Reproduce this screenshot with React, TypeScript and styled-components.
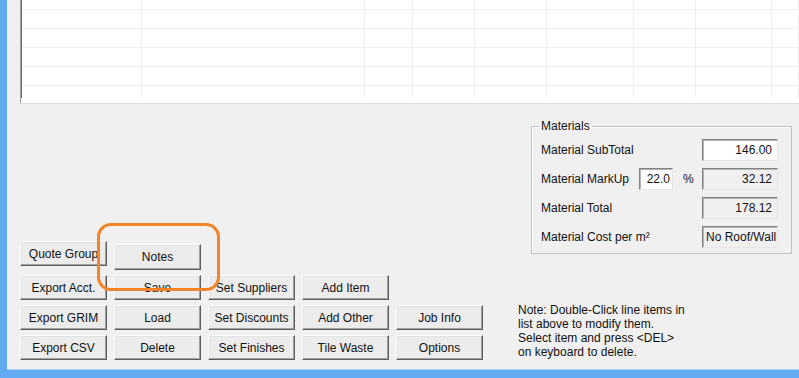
import styled, { createGlobalStyle } from 'styled-components'

const GlobalStyle = createGlobalStyle`
  html, body {
    margin: 0;
    padding: 0;
    overflow: hidden;
    background: #62aaf2;
  }
  body {
    font-family: "Liberation Sans", Arial, sans-serif;
    color: #111;
  }
`

const gridColumns = [120, 223, 48, 62, 72, 87, 62, 76, 27]
const gridRows = [10, 19, 19, 19, 19, 12]

const buttonRows: (string | null)[][] = [
  ['Quote Group', 'Notes', null, null, null],
  ['Export Acct.', 'Save', 'Set Suppliers', 'Add Item', null],
  ['Export GRIM', 'Load', 'Set Discounts', 'Add Other', 'Job Info'],
  ['Export CSV', 'Delete', 'Set Finishes', 'Tile Waste', 'Options'],
]

const noteLines = [
  'Note: Double-Click line items in',
  'list above to modify them.',
  'Select item and press <DEL>',
  'on keyboard to delete.',
]

export default function App() {
  return (
    <>
      <GlobalStyle />
      <Window>
        <Client>
          <ItemList>
            <ItemGrid>
              {gridRows.map((_, r) =>
                gridColumns.map((_, c) => <Cell key={`${r}-${c}`} $last={r === gridRows.length - 1} />)
              )}
            </ItemGrid>
          </ItemList>

          <Lower>
            <ButtonPanel>
              <ButtonGrid>
                {buttonRows.map((row, r) =>
                  row.map((label, c) =>
                    label ? (
                      <Button key={label} $drop={label === 'Notes'}>{label}</Button>
                    ) : (
                      <span key={`gap-${r}-${c}`} />
                    )
                  )
                )}
              </ButtonGrid>
            </ButtonPanel>

            <SidePanel>
              <GroupBox>
                <Legend>Materials</Legend>
                <FieldRow>
                  <Label $span={3}>Material SubTotal</Label>
                  <Field $editable>146.00</Field>
                </FieldRow>
                <FieldRow>
                  <Label>Material MarkUp</Label>
                  <Field $editable $small>22.0</Field>
                  <Percent>%</Percent>
                  <Field>32.12</Field>
                </FieldRow>
                <FieldRow>
                  <Label $span={3}>Material Total</Label>
                  <Field>178.12</Field>
                </FieldRow>
                <FieldRow>
                  <Label $span={3}>Material Cost per m²</Label>
                  <Field $left>No Roof/Wall Area</Field>
                </FieldRow>
              </GroupBox>

              <Note>
                {noteLines.map((line) => (
                  <div key={line}>{line}</div>
                ))}
              </Note>
            </SidePanel>
          </Lower>

          <Highlight />
        </Client>
      </Window>
    </>
  )
}

const Window = styled.div`
  width: 799px;
  height: 378px;
  box-sizing: border-box;
  padding: 0 0 8px 7px;
  background: #62aaf2;
  display: flex;
`

const Client = styled.div`
  position: relative;
  flex: 1;
  display: flex;
  flex-direction: column;
  background: #f0f0f0;
  border-bottom: 1px solid #a9d0f7;
`

const ItemList = styled.div`
  margin-left: 13px;
  height: 104px;
  box-sizing: border-box;
  border-left: 1px solid #a0a0a0;
  border-bottom: 1px solid #dcdcdc;
  background: #fff;
  overflow: hidden;
`

const ItemGrid = styled.div`
  display: grid;
  border-left: 1px solid #696969;
  grid-template-columns: ${gridColumns.map((w) => `${w}px`).join(' ')};
  grid-template-rows: ${gridRows.map((h) => `${h}px`).join(' ')};
`

const Cell = styled.div<{ $last?: boolean }>`
  border-right: 1px solid #efefef;
  border-bottom: ${(p) => (p.$last ? 'none' : '1px solid #efefef')};
`

const Lower = styled.div`
  flex: 1;
  display: flex;
`

const ButtonPanel = styled.div`
  width: 511px;
  box-sizing: border-box;
  padding: 0 0 9px 13px;
  display: flex;
  align-items: flex-end;
`

const ButtonGrid = styled.div`
  display: grid;
  grid-template-columns: repeat(5, 87px);
  grid-template-rows: 29px repeat(3, 25px);
  column-gap: 7px;
  row-gap: 5px;
`

const Button = styled.button<{ $drop?: boolean }>`
  width: 87px;
  height: ${(p) => (p.$drop ? '26px' : '25px')};
  margin-top: ${(p) => (p.$drop ? '3px' : '0')};
  padding: 0;
  box-sizing: border-box;
  font-family: "Liberation Sans", Arial, sans-serif;
  font-size: 12px;
  color: #111;
  white-space: nowrap;
  overflow: hidden;
  background: #ececec;
  border: 1px solid;
  border-color: #fdfdfd #5e5e5e #5e5e5e #fdfdfd;
  box-shadow: inset -1px -1px #a0a0a0, inset 1px 1px #e3e3e3;
`

const SidePanel = styled.div`
  flex: 1;
  display: flex;
  flex-direction: column;
  padding-bottom: 10px;
`

const GroupBox = styled.fieldset`
  margin: 15px 7px 0 13px;
  padding: 6px 13px 12px 9px;
  height: 135px;
  box-sizing: border-box;
  border: 1px solid #c2c2c2;
  box-shadow: inset 1px 1px #fff;
  display: flex;
  flex-direction: column;
  gap: 7px;
`

const Legend = styled.legend`
  margin-left: -2px;
  padding: 0 2px;
  font-size: 12px;
`

const FieldRow = styled.div`
  display: grid;
  grid-template-columns: 98px 34px 29px 76px;
  align-items: center;
  height: 22px;
`

const Label = styled.span<{ $span?: number }>`
  grid-column: span ${(p) => p.$span ?? 1};
  font-size: 12px;
  white-space: nowrap;
`

const Percent = styled.span`
  font-size: 12px;
  padding-left: 10px;
`

const Field = styled.div<{ $editable?: boolean; $small?: boolean; $left?: boolean }>`
  height: 22px;
  box-sizing: border-box;
  padding: 0 ${(p) => (p.$small ? '2px' : '5px')} 0 ${(p) => (p.$left ? '3px' : '4px')};
  border: 1px solid;
  border-color: #828282 #e6e6e6 #e6e6e6 #828282;
  box-shadow: inset 1px 1px #b4b4b4;
  background: ${(p) => (p.$editable ? '#fff' : '#f0f0f0')};
  font-size: 12px;
  line-height: 20px;
  text-align: ${(p) => (p.$left ? 'left' : 'right')};
  white-space: nowrap;
  overflow: hidden;
`

const Note = styled.div`
  margin-top: auto;
  font-size: 12px;
  line-height: 14px;
`

const Highlight = styled.div`
  position: absolute;
  left: 90px;
  top: 223px;
  width: 123px;
  height: 68px;
  box-sizing: border-box;
  border: 3px solid #f58327;
  border-radius: 14px;
  pointer-events: none;
`
